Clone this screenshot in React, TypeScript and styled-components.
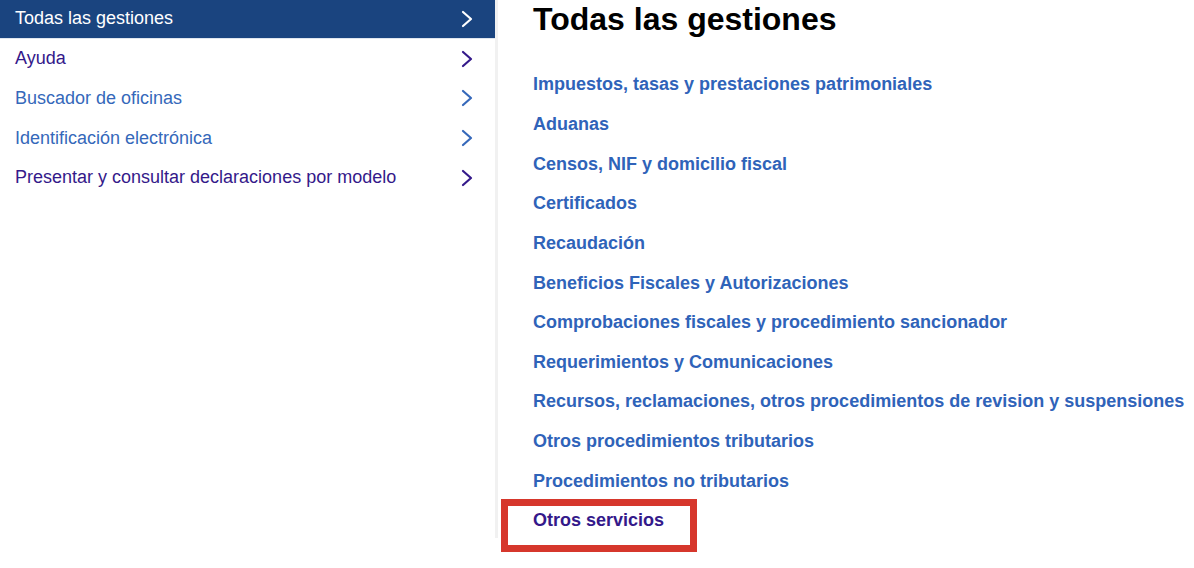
import styled, { createGlobalStyle } from "styled-components";

const GlobalStyle = createGlobalStyle`
    html, body {
        margin: 0;
        padding: 0;
        background: #ffffff;
        font-family: "Liberation Sans", Arial, sans-serif;
    }
    #root {
        min-height: 568px;
    }
`;

const BLUE = "#2f63b9";
const VISITED = "#34198a";

interface Entry {
    label: string,
    visited?: boolean
}

const sideItems: Entry[] = [
    { label: "Ayuda", visited: true },
    { label: "Buscador de oficinas" },
    { label: "Identificación electrónica" },
    { label: "Presentar y consultar declaraciones por modelo", visited: true }
];

const gestiones: Entry[] = [
    { label: "Impuestos, tasas y prestaciones patrimoniales" },
    { label: "Aduanas" },
    { label: "Censos, NIF y domicilio fiscal" },
    { label: "Certificados" },
    { label: "Recaudación" },
    { label: "Beneficios Fiscales y Autorizaciones" },
    { label: "Comprobaciones fiscales y procedimiento sancionador" },
    { label: "Requerimientos y Comunicaciones" },
    { label: "Recursos, reclamaciones, otros procedimientos de revision y suspensiones" },
    { label: "Otros procedimientos tributarios" },
    { label: "Procedimientos no tributarios" }
];

const Page = styled.div`
    display: flex;
    align-items: flex-start;
    width: 1194px;
    height: 568px;
`;

const Sidebar = styled.nav`
    width: 495px;
    flex-shrink: 0;
    height: 538px;
    border-right: 3px solid #f1f1f1;
`;

const SideRow = styled.a<{ $active?: boolean, $visited?: boolean }>`
    display: flex;
    align-items: center;
    justify-content: space-between;
    box-sizing: border-box;
    height: ${p => p.$active ? "38.8px" : "39.7px"};
    padding: 0 22px 0 15px;
    font-size: 18px;
    text-decoration: none;
    cursor: pointer;
    color: ${p => p.$active ? "#ffffff" : p.$visited ? VISITED : "#3568ba"};
    background: ${p => p.$active ? "#1a447f" : "transparent"};
    border-bottom: ${p => p.$active ? "1.5px solid #dfe6ef" : "none"};
`;

const Content = styled.main`
    flex: 1;
    padding-left: 35px;
`;

const Title = styled.h1`
    margin: -3px 0 0;
    height: 44px;
    display: flex;
    align-items: center;
    font-size: 32px;
    font-weight: 700;
    color: #000000;
`;

const List = styled.ul`
    list-style: none;
    margin: 24px 0 0;
    padding: 0;
`;

const Item = styled.li`
    position: relative;
    height: 39.65px;
    display: flex;
    align-items: center;
`;

const Link = styled.a<{ $visited?: boolean }>`
    font-size: 18px;
    font-weight: 700;
    white-space: nowrap;
    text-decoration: none;
    cursor: pointer;
    color: ${p => p.$visited ? VISITED : BLUE};
`;

const Highlight = styled.span`
    position: absolute;
    left: -32px;
    top: -2px;
    width: 196px;
    height: 53px;
    box-sizing: border-box;
    border: 7px solid #d6372c;
    pointer-events: none;
`;

function Chevron() {
    return (
        <svg width="12" height="18" viewBox="0 0 12 18" fill="none">
            <polyline points="2,2 10,9 2,16" stroke="currentColor" strokeWidth="2.2" strokeLinecap="round" strokeLinejoin="round" />
        </svg>
    );
}

export default function App() {
    return (
        <>
            <GlobalStyle />
            <Page>
                <Sidebar>
                    <SideRow $active>
                        <span>Todas las gestiones</span>
                        <Chevron />
                    </SideRow>
                    {sideItems.map(item => (
                        <SideRow key={item.label} $visited={item.visited}>
                            <span>{item.label}</span>
                            <Chevron />
                        </SideRow>
                    ))}
                </Sidebar>
                <Content>
                    <Title>Todas las gestiones</Title>
                    <List>
                        {gestiones.map(g => (
                            <Item key={g.label}>
                                <Link $visited={g.visited}>{g.label}</Link>
                            </Item>
                        ))}
                        <Item>
                            <Link $visited>Otros servicios</Link>
                            <Highlight />
                        </Item>
                    </List>
                </Content>
            </Page>
        </>
    );
}
